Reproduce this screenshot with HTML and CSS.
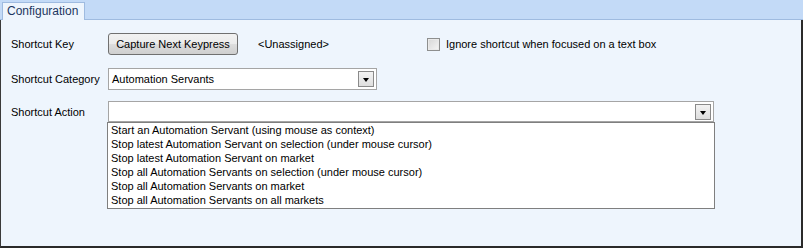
FILE: index.html
```html
<!doctype html>
<html lang="en-US">
  <head>
    <meta charset="utf-8" />
    <title>Configuration</title>
    <link rel="stylesheet" href="styles.css">
  </head>
  <body>
<div class="tabstrip">
  <div class="tab">Configuration</div>
</div>

<div class="panel">

  <div class="row first">
    <div class="label">Shortcut Key</div>
    <div class="button">Capture Next Keypress</div>
    <div class="unassigned">&lt;Unassigned&gt;</div>
    <div class="check"><span class="box"></span>Ignore shortcut when focused on a text box</div>
  </div>

  <div class="row second">
    <div class="label">Shortcut Category</div>
    <div class="combo short">
      <span class="value">Automation Servants</span>
      <span class="arrow"></span>
    </div>
  </div>

  <div class="row third">
    <div class="label">Shortcut Action</div>
    <div class="combo long">
      <span class="value"></span>
      <span class="arrow"></span>
      <ul class="droplist">
        <li>Start an Automation Servant (using mouse as context)</li>
        <li>Stop latest Automation Servant on selection (under mouse cursor)</li>
        <li>Stop latest Automation Servant on market</li>
        <li>Stop all Automation Servants on selection (under mouse cursor)</li>
        <li>Stop all Automation Servants on market</li>
        <li>Stop all Automation Servants on all markets</li>
      </ul>
    </div>
  </div>

</div>
  </body>
</html>
```

FILE: styles.css
```css
body {
  margin: 0;
  width: 803px;
  height: 248px;
  font-family: "Liberation Sans", Arial, sans-serif;
  font-size: 11px;
  color: #000;
  background-color: #eef5fd;
}

.tabstrip {
  height: 19px;
  background-color: #c3daf7;
  border-bottom: 1px solid #9fbbe0;
  padding-left: 2px;
  display: flex;
  align-items: flex-end;
}

.tab {
  height: 17px;
  width: 77px;
  margin-bottom: -1px;
  background-color: #eef5fd;
  border: 1px solid #9fbbe0;
  border-bottom: none;
  color: #1c3660;
  font-size: 12px;
  line-height: 17px;
  padding-left: 4px;
  box-sizing: content-box;
}

.panel {
  height: 226px;
  border-left: 1px solid #3a3a3a;
  border-right: 2px solid #2a2a2a;
  border-bottom: 2px solid #2a2a2a;
  background-color: #eef5fd;
  padding-left: 10px;
}

.row {
  display: flex;
  align-items: center;
}

.row.first {
  padding-top: 13px;
}

.row.second {
  margin-top: 13px;
}

.row.third {
  margin-top: 11px;
}

.label {
  width: 97px;
  font-size: 11px;
}

.button {
  width: 128px;
  height: 20px;
  line-height: 20px;
  text-align: center;
  border: 1px solid #707070;
  border-radius: 3px;
  background: linear-gradient(#f2f2f2, #ebebeb 50%, #dddddd 50%, #cfcfcf);
}

.unassigned {
  margin-left: 20px;
}

.check {
  margin-left: 98px;
  display: flex;
  align-items: center;
}

.box {
  width: 11px;
  height: 11px;
  border: 1px solid #8e8f8f;
  background: linear-gradient(135deg, #d6d6d6, #f6f6f6);
  box-shadow: inset 0 0 0 1px #eaeaea;
  margin-right: 6px;
}

.combo {
  position: relative;
  height: 20px;
  border: 1px solid #a5a5a5;
  background-color: #fff;
  display: flex;
  align-items: center;
  justify-content: space-between;
}

.combo.short {
  width: 267px;
}

.combo.long {
  width: 604px;
  height: 19px;
}

.value {
  padding-left: 3px;
}

.arrow {
  width: 14px;
  height: 14px;
  margin-right: 2px;
  border: 1px solid #8a8a8a;
  background: linear-gradient(#f3f3f3, #dedede);
  position: relative;
}

.arrow::after {
  content: "";
  position: absolute;
  left: 4px;
  top: 6px;
  border-left: 3px solid transparent;
  border-right: 3px solid transparent;
  border-top: 4px solid #000;
}

.droplist {
  position: absolute;
  left: -2px;
  top: 20px;
  width: 606px;
  margin: 0;
  padding: 0 0 1px 0;
  list-style: none;
  background-color: #fff;
  border: 1px solid #7f7f7f;
}

.droplist li {
  height: 14px;
  line-height: 14px;
  padding-left: 3px;
  white-space: nowrap;
}
```
